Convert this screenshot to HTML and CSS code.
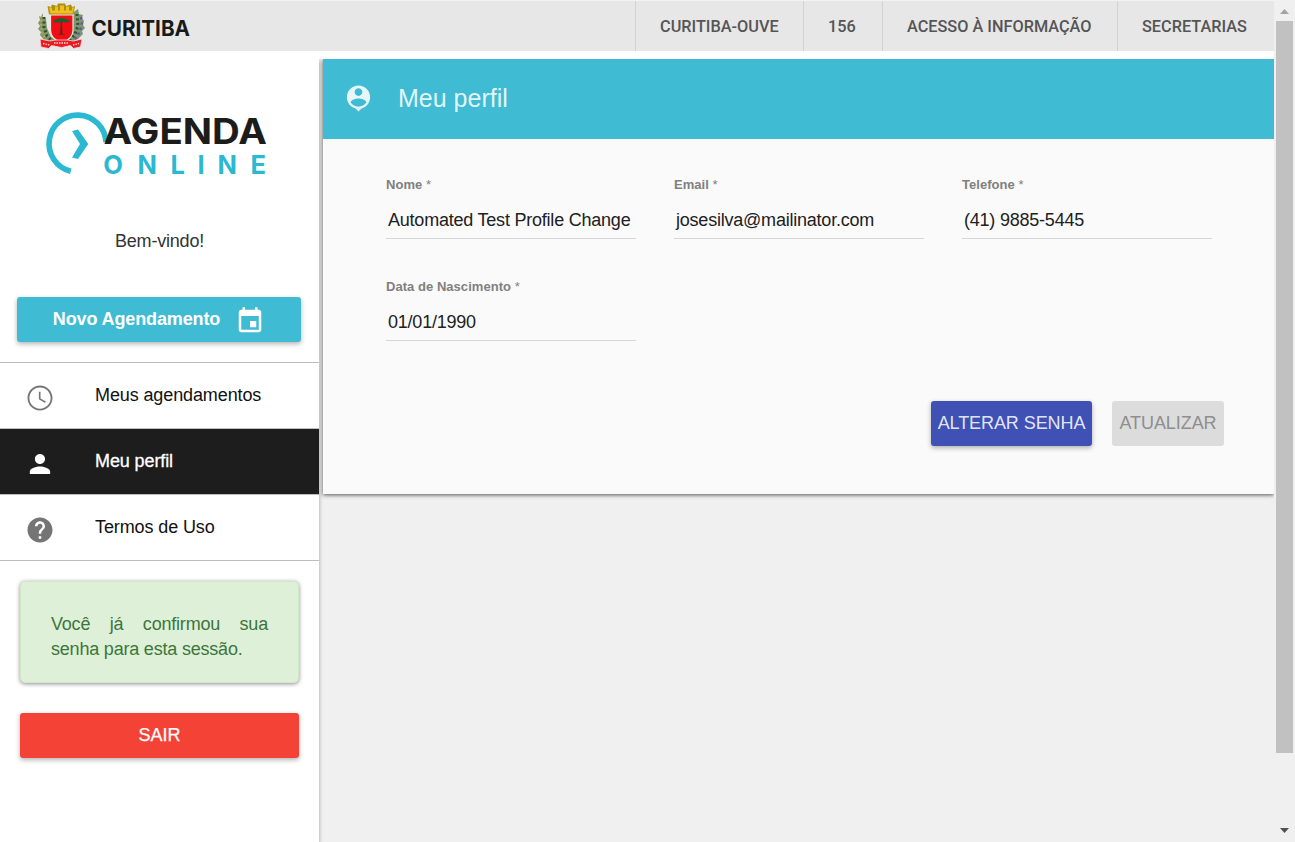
FILE: index.html
```html
<!DOCTYPE html>
<html lang="pt-BR">
<head>
<meta charset="utf-8">
<title>Agenda Online - Meu perfil</title>
<link rel="stylesheet" href="styles.css">
</head>
<body>
<div class="page">
  <div class="app">
    <header class="topbar">
      <svg class="brand" width="160" height="50" viewBox="36 1 160 50">
        <g class="leaves">
          <path fill="#7f9670" d="M43 13l-2 4-2-1 1 4-2 3 2 3-2 3 3 3-1 3 4 5 8 3h18l8-4 5-5-1-3 3-3-2-3 1-4-2-3 1-3-4-1-1-5-4 3-1 5 0 11-5 9-8 5-9-5-4-9-1-9-3-2z"/>
          <path fill="none" stroke="#c9a53c" stroke-width="2" stroke-dasharray="2 2" d="M42 16l-1 8 1 8 4 8"/>
          <path fill="none" stroke="#655599" stroke-width="2.400" stroke-dasharray="2.400 3" d="M81 17l1 8-3 8-4 6"/>
          <path fill="none" stroke="#25552f" stroke-width="3" stroke-dasharray="2 2.500" d="M44 17l0 10 3 9 4 4M77 14l1 12-3 8-5 6"/>
        </g>
        <path fill="#f20d14" stroke="#f1e6dc" stroke-width="1.200" d="M50.500 15h22.500v15c0 7-4 10.500-11.300 12.800C54.500 40.500 50.500 37 50.500 30z"/>
        <path fill="#b08d14" d="M47.500 6l3.500 1 1-2.500 5 1.500 1-2.500h7l1 2.500 5-1.500 1 2.500 3-1-1.500 8.500H49z"/>
        <path fill="#edc21e" d="M49 7.500h3v3h3v-4h3v4h2v-5h4v5h2v-4h3v4h3v-3h2l-1.500 6h-22z"/>
        <path fill="#235c2c" d="M53.500 21c1-2 3-1.500 4-2.300 3-1 6-.7 8 .3 2 0 4 1 4 2.300-1 1.500-4 1.500-6 .8-3 1-3 .8-5 .2-2 .8-5 0-5-1.300z"/>
        <path fill="#6c2517" d="M60.800 22h1.200l.4 11.500 2.600 1.300h-7.500l2.500-1.300z"/>
        <path fill="#ee1820" stroke="#f2dddd" stroke-width=".8" d="M40 39l10 2 5-1h13l5 1 9-2-1.500 8-7 1.500-3-3-9 2-10-2-3 3-7.500-1.500z"/>
        <path fill="none" stroke="#f7dada" stroke-width="1.300" stroke-dasharray="1.500 1" d="M43 43.500l7 1.500M54 43h15M73 45l6-1.500"/>
        <text class="brand-name" x="91.500" y="35.500" textLength="98.500" lengthAdjust="spacingAndGlyphs">CURITIBA</text>
      </svg>
      <nav class="topnav">
        <a class="topnav-link">CURITIBA-OUVE</a>
        <a class="topnav-link">156</a>
        <a class="topnav-link">ACESSO À INFORMAÇÃO</a>
        <a class="topnav-link">SECRETARIAS</a>
      </nav>
    </header>
    <div class="body">
      <aside class="sidebar">
        <svg class="logo" width="226" height="70" viewBox="44 109 226 70">
          <path fill="none" stroke="#2bb9d2" stroke-width="5.600" d="M106 142A28.500 28.500 0 1 0 70.800 171.300"/>
          <path fill="#2bb9d2" d="M72 131l6-1.500 10.300 14.500-10.300 15-6-1.500 8-13.500z"/>
          <text class="logo-agenda" x="103.500" y="144" textLength="163.500" lengthAdjust="spacingAndGlyphs">AGENDA</text>
          <text class="logo-online" x="103.200 137.500 170.500 197.500 217.500 250.500" y="173.700">ONLINE</text>
        </svg>
        <p class="welcome">Bem-vindo!</p>
        <button class="btn btn-new">Novo Agendamento
          <svg class="btn-icon" viewBox="0 0 24 24"><path d="M17 12h-5v5h5v-5zM16 1v2H8V1H6v2H5c-1.110 0-1.990.9-1.990 2L3 19c0 1.100.89 2 2 2h14c1.100 0 2-.9 2-2V5c0-1.100-.9-2-2-2h-1V1h-2zm3 18H5V8h14v11z"/></svg>
        </button>
        <nav class="menu">
          <a class="menu-item"><svg class="menu-icon" viewBox="0 0 24 24"><path d="M11.990 2C6.470 2 2 6.480 2 12s4.470 10 9.990 10C17.520 22 22 17.520 22 12S17.520 2 11.990 2zM12 20.500c-4.700 0-8.500-3.800-8.500-8.500S7.300 3.500 12 3.500s8.500 3.800 8.500 8.500-3.800 8.500-8.500 8.500zM12.400 7h-1.300v6l5 2.900.6-1.100-4.300-2.500z"/></svg>Meus agendamentos</a>
          <a class="menu-item active"><svg class="menu-icon" viewBox="0 0 24 24"><path d="M12 12c2.210 0 4-1.790 4-4s-1.790-4-4-4-4 1.790-4 4 1.790 4 4 4zm0 2c-2.670 0-8 1.340-8 4v2h16v-2c0-2.660-5.330-4-8-4z" transform="translate(-.2 0) scale(1.015 1)"/></svg>Meu perfil</a>
          <a class="menu-item"><svg class="menu-icon" viewBox="0 0 24 24"><path d="M12 2C6.480 2 2 6.480 2 12s4.480 10 10 10 10-4.480 10-10S17.520 2 12 2zm1 17h-2v-2h2v2zm2.070-7.750l-.9.920C13.450 12.900 13 13.500 13 15h-2v-.5c0-1.100.45-2.100 1.170-2.830l1.240-1.260c.37-.36.59-.86.59-1.410 0-1.100-.9-2-2-2s-2 .9-2 2H8c0-2.210 1.790-4 4-4s4 1.790 4 4c0 .88-.36 1.680-.93 2.250z"/></svg>Termos de Uso</a>
        </nav>
        <div class="notice">Você já confirmou sua senha para esta sessão.</div>
        <button class="btn btn-exit">SAIR</button>
      </aside>
      <main class="content">
        <section class="card">
          <h1 class="card-head"><svg class="card-icon" viewBox="0 0 24 24"><path d="M12 2c-4.970 0-9 4.030-9 9 0 4.170 2.840 7.670 6.690 8.690L12 22l2.310-2.310C18.160 18.670 21 15.170 21 11c0-4.970-4.030-9-9-9zm0 2c1.660 0 3 1.340 3 3s-1.340 3-3 3-3-1.340-3-3 1.340-3 3-3zm0 14.300c-2.500 0-4.710-1.280-6-3.220.03-1.990 4-3.080 6-3.080 1.990 0 5.970 1.090 6 3.080-1.290 1.940-3.500 3.220-6 3.220z"/></svg>Meu perfil</h1>
          <div class="fields">
            <div class="field"><label class="label">Nome <span class="required">*</span></label><div class="value">Automated Test Profile Change</div></div>
            <div class="field"><label class="label">Email <span class="required">*</span></label><div class="value">josesilva@mailinator.com</div></div>
            <div class="field"><label class="label">Telefone <span class="required">*</span></label><div class="value">(41) 9885-5445</div></div>
            <div class="field"><label class="label">Data de Nascimento <span class="required">*</span></label><div class="value">01/01/1990</div></div>
          </div>
          <div class="actions">
            <button class="btn btn-password">ALTERAR SENHA</button>
            <button class="btn btn-update" disabled>ATUALIZAR</button>
          </div>
        </section>
      </main>
    </div>
  </div>
  <div class="scrollbar">
    <svg width="9" height="5" viewBox="0 0 9 5"><path fill="#a3a3a3" d="M4.500 0L9 5H0z"/></svg>
    <div class="thumb"></div>
    <svg class="arrow-down" width="9" height="5" viewBox="0 0 9 5"><path fill="#505050" d="M0 0h9L4.500 5z"/></svg>
  </div>
</div>
</body>
</html>
```
FILE: styles.css
```css
* { box-sizing: border-box; }
body { margin: 0; font: 18px "Liberation Sans", Arial, sans-serif; color: #212121; background: #f0f0f0; overflow: hidden; }
.page { display: flex; width: 1295px; height: 842px; }
.app { width: 1274px; display: flex; flex-direction: column; }
.topbar { height: 51px; flex: none; display: flex; justify-content: space-between; background: #e7e7e7; border-top: 1px solid #f3f3f3; }
.brand { margin-left: 36px; }
.brand-name { font: 700 21.500px Inter, sans-serif; fill: #171a19; }
.topnav { display: grid; grid-template-columns: 168px 79px 235px 157px; }
.topnav-link { border-left: 1px solid #d2d2d2; padding-left: 24px; font: 500 16.300px/51px Roboto, sans-serif; color: #555; white-space: nowrap; }
.body { flex: 1; display: flex; border-top: 8px solid #fff; border-image: linear-gradient(#fff 40%, #f2f2f2) 8 0 0 0; min-height: 0; }
.sidebar { width: 319px; flex: none; background: #fff; display: flex; flex-direction: column; box-shadow: 0 2px 4px rgba(0,0,0,.35); clip-path: inset(0 -4px 0 0); }
.logo { margin: 50px 0 0 44px; flex: none; }
.logo-agenda { font: 700 35px Inter, sans-serif; fill: #1c1c1a; }
.logo-online { font: 700 25.500px Inter, sans-serif; fill: #2bb9d2; }
.welcome { margin: 52px 0 0; line-height: 20px; text-align: center; color: #333; letter-spacing: -.2px; }
.btn { border: 0; border-radius: 3px; height: 45px; padding: 0; font: 18px "Liberation Sans", Arial, sans-serif; box-shadow: 0 2px 5px rgba(0,0,0,.3); display: flex; align-items: center; justify-content: center; flex: none; }
.btn-new { margin: 46px 18px 0 17px; background: #3fbbd4; color: #fff; font-weight: 700; letter-spacing: -.12px; gap: 15px; }
.btn-icon { width: 30px; height: 30px; margin-top: 2px; fill: #fff; }
.menu { margin-top: 20px; border-top: 1px solid #bdbdbd; }
.menu-item { height: 66px; border-bottom: 1px solid #bdbdbd; display: flex; align-items: center; color: #111; padding: 0 0 1px 25px; letter-spacing: -.11px; }
.menu-icon { width: 30px; height: 30px; margin: 6px 40px 0 0; fill: #757575; }
.active { background: #1d1d1d; color: #fff; -webkit-text-stroke: .3px; }
.active .menu-icon { fill: #fff; }
.notice { margin: 20px 20px 0; height: 102px; padding: 30px; border: 1px solid #d0e9c6; border-radius: 5px; background: #dff0d8; color: #3c763d; line-height: 25px; letter-spacing: -.2px; text-align: justify; box-shadow: 0 1px 4px rgba(0,0,0,.45); }
.btn-exit { margin: 30px 20px 0; background: #f44336; color: #fff; -webkit-text-stroke: .25px; }
.content { flex: 1; padding-left: 4px; }
.card { height: 435px; background: #fafafa; box-shadow: 0 1px 4px rgba(0,0,0,.65); clip-path: inset(0 0 -6px -4px); display: flex; flex-direction: column; }
.card-head { margin: 0; height: 80px; display: flex; align-items: center; background: #3fbbd4; color: rgba(255,255,255,.87); font-size: 25px; font-weight: 400; padding: 0 0 2px 20px; }
.card-icon { width: 31px; height: 31px; fill: currentColor; margin: 1px 24px 0 0; }
.fields { display: grid; grid-template-columns: repeat(3, 250px); column-gap: 38px; row-gap: 32px; padding: 30px 0 0 63px; }
.field { height: 70px; }
.label { display: block; height: 32px; font-size: 13px; font-weight: 700; line-height: 31px; letter-spacing: .04px; color: #808080; }
.required { font-weight: 400; }
.value { height: 38px; border-bottom: 1px solid #d6d6d6; padding-left: 2px; line-height: 38px; white-space: nowrap; letter-spacing: -.22px; }
.actions { display: flex; justify-content: flex-end; gap: 20px; padding: 60px 50px 0 0; }
.btn-password { width: 161px; background: #3f51b5; color: rgba(255,255,255,.87); letter-spacing: -.08px; }
.btn-update { width: 112px; background: #dcdcdc; color: #8e8e8e; box-shadow: none; letter-spacing: -.08px; }
.scrollbar { width: 21px; background: #f0f0f0; display: flex; flex-direction: column; align-items: center; padding-top: 9px; }
.thumb { width: 17px; height: 732px; margin-top: 7px; background: #c1c1c1; flex: none; }
.arrow-down { margin-top: 75px; }
```
